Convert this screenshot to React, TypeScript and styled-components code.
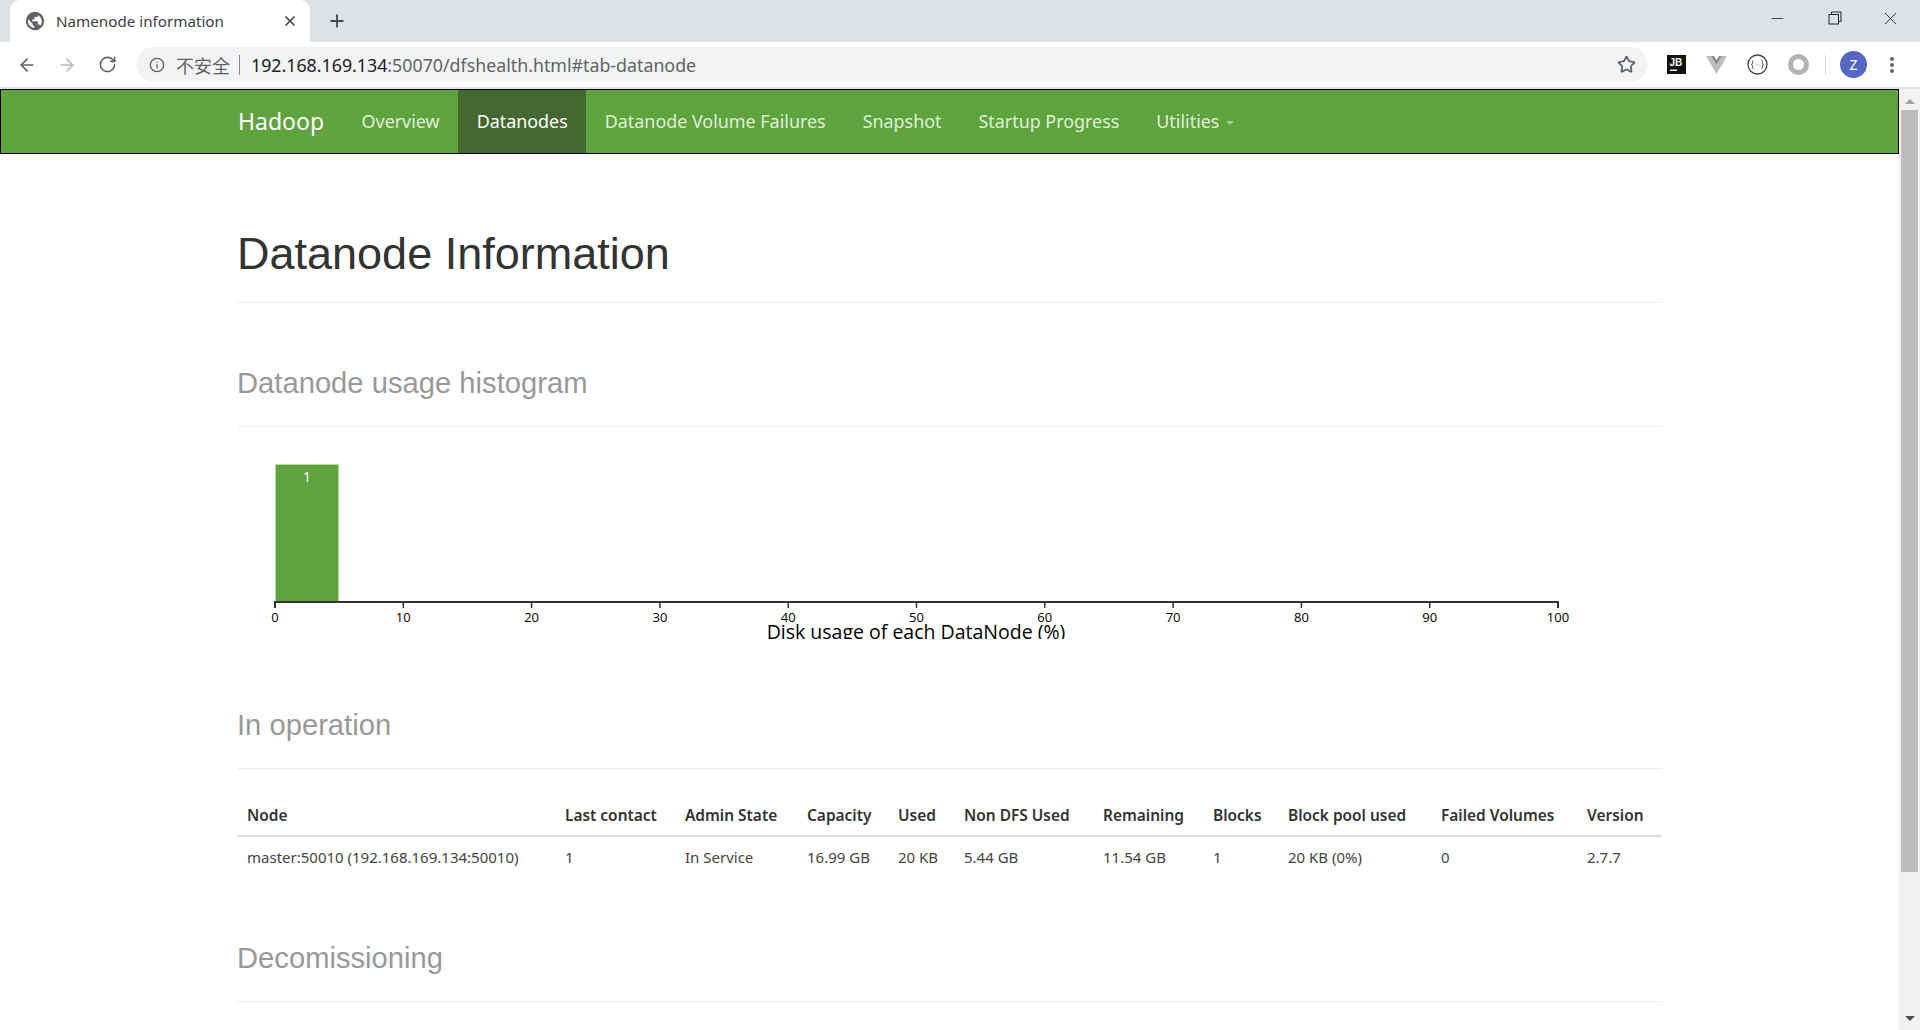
import styled, { createGlobalStyle } from 'styled-components';
import { ArrowLeft, ArrowRight, RotateCw, Info, Star, Plus, X, Minus } from 'lucide-react';

const GlobalStyle = createGlobalStyle`
  html, body {
    margin: 0;
    height: 100%;
    overflow: hidden;
    background: #fff;
  }
  #root {
    height: 100%;
  }
`;

const Screen = styled.div`
  display: flex;
  flex-direction: column;
  height: 1030px;
  font-family: 'Noto Sans', 'Noto Sans CJK SC', sans-serif;
  color: #333;
`;

const TabStrip = styled.div`
  display: flex;
  align-items: flex-end;
  height: 42px;
  padding-left: 10px;
  background: #dee1e6;
`;

const Tab = styled.div`
  display: flex;
  align-items: center;
  width: 300px;
  height: 42px;
  box-sizing: border-box;
  padding: 0 12px 0 15px;
  background: #fff;
  border-radius: 10px 10px 0 0;
`;

const TabTitle = styled.span`
  flex: 1;
  margin-left: 11px;
  font-size: 15.2px;
  color: #3c4043;
`;

const NewTab = styled.div`
  display: flex;
  align-items: center;
  height: 42px;
  margin-left: 17px;
  color: #45484c;
`;

const WindowButtons = styled.div`
  display: flex;
  align-items: center;
  gap: 38px;
  height: 36px;
  margin: 0 19px 6px auto;
  color: #222;
`;

const MinimizeIcon = styled(Minus)`
  margin-right: 3px;
`;

const Toolbar = styled.div`
  display: flex;
  align-items: center;
  height: 45px;
  padding-left: 17px;
  background: #fff;
  border-bottom: 2px solid #e2e3e5;
`;

const NavIcon = styled.div<{ $dim?: boolean; $nudge?: number }>`
  display: flex;
  width: 20px;
  margin-right: 20px;
  padding-left: ${(p) => p.$nudge ?? 0}px;
  box-sizing: border-box;
  color: ${(p) => (p.$dim ? '#b6b8bb' : '#5f6368')};
`;

const AddressBar = styled.div`
  display: flex;
  align-items: center;
  flex: 1;
  height: 35px;
  margin-left: -1px;
  padding: 0 12px 0 13px;
  border-radius: 18px;
  background: #f1f3f4;
  font-size: 17.8px;
`;

const Insecure = styled.span`
  margin-left: 11px;
  font-size: 18px;
  color: #5f6368;
`;

const Divider = styled.span`
  width: 1px;
  height: 20px;
  margin: 0 11px 0 9px;
  background: #80868b;
`;

const Host = styled.span`
  color: #202124;
`;

const Rest = styled.span`
  color: #5f6368;
`;

const Push = styled.span`
  flex: 1;
`;

const Extensions = styled.div`
  display: flex;
  align-items: center;
  width: 272px;
  padding-left: 19px;
  box-sizing: border-box;
  gap: 20px;
`;

const ToolbarSep = styled.span`
  width: 1px;
  height: 20px;
  margin: 0 -3px 0 -4px;
  background: #d5d7da;
`;

const Avatar = styled.div`
  display: flex;
  align-items: center;
  justify-content: center;
  width: 27px;
  height: 27px;
  margin: 0 2px 0 -3px;
  border-radius: 50%;
  background: #5566c4;
  color: #fff;
  font-size: 14px;
`;

const Viewport = styled.div`
  display: flex;
  flex: 1;
  min-height: 0;
`;

const Page = styled.div`
  flex: 1;
  min-width: 0;
  overflow: hidden;
`;

const NavBar = styled.nav`
  display: flex;
  height: 65px;
  box-sizing: border-box;
  padding-left: 237px;
  background: #5fa33e;
  border: 1px solid #000;
  font-size: 17.9px;
`;

const Brand = styled.a`
  display: flex;
  align-items: center;
  margin: -2px 19px 0 0;
  color: #fff;
  font-size: 23px;
`;

const NavItem = styled.a<{ $active?: boolean }>`
  display: flex;
  align-items: center;
  padding: 0 18.5px 2px;
  color: ${(p) => (p.$active ? '#fff' : '#dff0d8')};
  background: ${(p) => (p.$active ? '#456832' : 'transparent')};
`;

const Caret = styled.span`
  width: 0;
  height: 0;
  margin: 4px 0 0 7px;
  border-top: 4px solid #a9cf98;
  border-left: 4px solid transparent;
  border-right: 4px solid transparent;
`;

const Container = styled.div`
  width: 1425px;
  margin-left: 237px;
`;

const PageHeader = styled.div`
  height: 149px;
  box-sizing: border-box;
  padding-top: 73px;
  border-bottom: 1px solid #eee;
`;

const Title = styled.h1`
  margin: 0;
  font-family: 'Liberation Sans', Arial, sans-serif;
  font-size: 45px;
  font-weight: 400;
  line-height: 54px;
  color: #333;
`;

const SectionHead = styled.div<{ $height: number }>`
  display: flex;
  align-items: flex-end;
  height: ${(p) => p.$height}px;
  box-sizing: border-box;
  padding-bottom: 26px;
  border-bottom: 1px solid #eee;
`;

const SectionTitle = styled.h2`
  margin: 0;
  font-family: 'Liberation Sans', Arial, sans-serif;
  font-size: 29.2px;
  font-weight: 400;
  line-height: 34px;
  color: #999;
`;

const Histogram = styled.svg`
  display: block;
  margin-top: 22px;
  font-family: 'Open Sans', sans-serif;
`;

const DataTable = styled.table`
  width: 1425px;
  margin-top: 23px;
  table-layout: fixed;
  border-collapse: collapse;

  th {
    height: 44px;
    padding: 2px 0 0 10px;
    box-sizing: border-box;
    text-align: left;
    font-size: 15.45px;
    font-weight: 600;
    color: #333;
    border-bottom: 2px solid #ddd;
    white-space: nowrap;
  }

  td {
    height: 39px;
    padding: 0 0 0 10px;
    font-size: 15px;
    color: #444;
    white-space: nowrap;
  }
`;

const ScrollBar = styled.div`
  display: flex;
  flex-direction: column;
  align-items: center;
  width: 21px;
  background: #f1f1f1;
`;

const ScrollArrow = styled.span<{ $up?: boolean }>`
  width: 0;
  height: 0;
  margin: ${(p) => (p.$up ? '10px 0 0' : 'auto 0 9px')};
  border-left: 5px solid transparent;
  border-right: 5px solid transparent;
  ${(p) => (p.$up ? 'border-bottom: 5px solid #a3a3a3;' : 'border-top: 5px solid #505050;')}
`;

const ScrollThumb = styled.div`
  width: 17px;
  height: 762px;
  margin-top: 6px;
  background: #bdbdbd;
`;

const GlobeIcon = () => (
  <svg width="20" height="20" viewBox="0 0 24 24" fill="#5f6368">
    <path d="M12 1a11 11 0 1 0 0 22 11 11 0 0 0 0-22zM3.500 12c0-.8.1-1.500.3-2.200L9 15v1c0 1.100.9 2 2 2v2.400A8.500 8.500 0 0 1 3.500 12zm14.800 5.600c-.3-.8-1-1.300-1.900-1.300h-1v-3c0-.6-.4-1-1-1H8.500v-2h2c.6 0 1-.4 1-1v-2h2c1.100 0 2-.9 2-2v-.5a8.500 8.500 0 0 1 2.800 12.800z" />
  </svg>
);

const JbIcon = () => (
  <svg width="19" height="19" viewBox="0 0 19 19">
    <rect width="19" height="19" fill="#111" />
    <path d="M3 14.500h7v1.500H3z" fill="#fff" />
    <text x="2.500" y="10.500" fontFamily="Liberation Sans" fontSize="10" fontWeight="700" fill="#fff">JB</text>
  </svg>
);

const VueIcon = () => (
  <svg width="21" height="18" viewBox="0 0 21 18">
    <path d="M0 0h5l5.500 9L16 0h5L10.500 18z" fill="#bdbdbd" />
    <path d="M5 0h3.200l2.300 4 2.300-4H16l-5.500 9z" fill="#8d8d8d" />
  </svg>
);

const BracesIcon = () => (
  <svg width="21" height="21" viewBox="0 0 21 21" fill="none">
    <circle cx="10.500" cy="10.500" r="9.500" stroke="#444" strokeWidth="1.300" />
    <path d="M6.500 6.500c-1.200 0-1 1-1 2s-.2 2-1 2c.8 0 1 1 1 2s-.2 2 1 2M14.500 6.500c1.200 0 1 1 1 2s.2 2 1 2c-.8 0-1 1-1 2s.2 2-1 2" stroke="#444" />
    <path d="M8.500 11h.8M10.200 11h.8M11.900 11h.8" stroke="#999" />
  </svg>
);

const RingIcon = () => (
  <svg width="21" height="21" viewBox="0 0 21 21" fill="none">
    <circle cx="10.500" cy="10.500" r="8" stroke="#b3b3b3" strokeWidth="5" />
  </svg>
);

const DotsIcon = () => (
  <svg width="6" height="18" viewBox="0 0 6 18" fill="#5f6368">
    <circle cx="3" cy="3" r="2" />
    <circle cx="3" cy="9" r="2" />
    <circle cx="3" cy="15" r="2" />
  </svg>
);

const RestoreIcon = () => (
  <svg width="14" height="14" viewBox="0 0 14 14" fill="none" stroke="#222">
    <rect x="1" y="3.500" width="9.500" height="9.500" />
    <path d="M3.500 3.500V1H13v9.500h-2.500" />
  </svg>
);

const ticks = [0, 10, 20, 30, 40, 50, 60, 70, 80, 90, 100];
const axisStart = 38;
const axisStep = 12.83;

const UsageChart = () => (
  <Histogram width="1425" height="190" viewBox="0 0 1425 190">
    <rect x="38.500" y="15.500" width="63" height="138" fill="#5fa33e" stroke="#b8d8a8" />
    <text x="70" y="33" textAnchor="middle" fontSize="14" fill="#fff">1</text>
    <path d="M38 159v-6H1321v6" fill="none" stroke="#333" strokeWidth="2" />
    {ticks.map((t) => (
      <g key={t}>
        <line x1={axisStart + t * axisStep} x2={axisStart + t * axisStep} y1="153" y2="159" stroke="#333" strokeWidth="1.500" />
        <text x={axisStart + t * axisStep} y="173" textAnchor="middle" fontSize="13" fill="#000">{t}</text>
      </g>
    ))}
    <text x="679" y="190" textAnchor="middle" fontSize="19.500" fill="#000">Disk usage of each DataNode (%)</text>
  </Histogram>
);

const navItems = ['Overview', 'Datanodes', 'Datanode Volume Failures', 'Snapshot', 'Startup Progress'];

const columns = [
  { label: 'Node', width: 318, value: 'master:50010 (192.168.169.134:50010)' },
  { label: 'Last contact', width: 120, value: '1' },
  { label: 'Admin State', width: 122, value: 'In Service' },
  { label: 'Capacity', width: 91, value: '16.99 GB' },
  { label: 'Used', width: 66, value: '20 KB' },
  { label: 'Non DFS Used', width: 139, value: '5.44 GB' },
  { label: 'Remaining', width: 110, value: '11.54 GB' },
  { label: 'Blocks', width: 75, value: '1' },
  { label: 'Block pool used', width: 153, value: '20 KB (0%)' },
  { label: 'Failed Volumes', width: 146, value: '0' },
  { label: 'Version', width: 85, value: '2.7.7' },
];

export default function App() {
  return (
    <Screen>
      <GlobalStyle />
      <TabStrip>
        <Tab>
          <GlobeIcon />
          <TabTitle>Namenode information</TabTitle>
          <X size={16} color="#3c4043" strokeWidth={2.5} />
        </Tab>
        <NewTab>
          <Plus size={20} strokeWidth={2.2} />
        </NewTab>
        <WindowButtons>
          <MinimizeIcon size={19} strokeWidth={1} />
          <RestoreIcon />
          <X size={21} strokeWidth={1} />
        </WindowButtons>
      </TabStrip>
      <Toolbar>
        <NavIcon><ArrowLeft size={20} /></NavIcon>
        <NavIcon $dim><ArrowRight size={20} /></NavIcon>
        <NavIcon $nudge={1}><RotateCw size={19} /></NavIcon>
        <AddressBar>
          <Info size={16} color="#5f6368" />
          <Insecure>不安全</Insecure>
          <Divider />
          <Host>192.168.169.134</Host>
          <Rest>:50070/dfshealth.html#tab-datanode</Rest>
          <Push />
          <Star size={19} color="#5f6368" strokeWidth={2.2} />
        </AddressBar>
        <Extensions>
          <JbIcon />
          <VueIcon />
          <BracesIcon />
          <RingIcon />
          <ToolbarSep />
          <Avatar>Z</Avatar>
          <DotsIcon />
        </Extensions>
      </Toolbar>
      <Viewport>
        <Page>
          <NavBar>
            <Brand>Hadoop</Brand>
            {navItems.map((item) => (
              <NavItem key={item} $active={item === 'Datanodes'}>{item}</NavItem>
            ))}
            <NavItem>Utilities<Caret /></NavItem>
          </NavBar>
          <Container>
            <PageHeader>
              <Title>Datanode Information</Title>
            </PageHeader>
            <SectionHead $height={124}>
              <SectionTitle>Datanode usage histogram</SectionTitle>
            </SectionHead>
            <UsageChart />
            <SectionHead $height={130}>
              <SectionTitle>In operation</SectionTitle>
            </SectionHead>
            <DataTable>
              <colgroup>
                {columns.map((c) => <col key={c.label} width={c.width} />)}
              </colgroup>
              <thead>
                <tr>{columns.map((c) => <th key={c.label}>{c.label}</th>)}</tr>
              </thead>
              <tbody>
                <tr>{columns.map((c) => <td key={c.label}>{c.value}</td>)}</tr>
              </tbody>
            </DataTable>
            <SectionHead $height={126}>
              <SectionTitle>Decomissioning</SectionTitle>
            </SectionHead>
          </Container>
        </Page>
        <ScrollBar>
          <ScrollArrow $up />
          <ScrollThumb />
          <ScrollArrow />
        </ScrollBar>
      </Viewport>
    </Screen>
  );
}
